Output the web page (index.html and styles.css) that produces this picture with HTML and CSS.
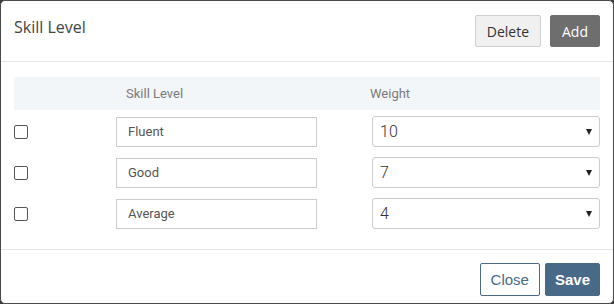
FILE: index.html
```html
<!DOCTYPE html>
<html lang="en">

<head>
  <meta charset="UTF-8">
  <meta name="viewport" content="width=device-width, initial-scale=1.0">
  <title>Skill Level</title>
  <link rel="stylesheet" href="styles.css">
</head>

<body>
  <div class="modal">
    <div class="modal-header">
      <h1>Skill Level</h1>
      <div class="header-buttons">
        <button class="btn btn-light">Delete</button>
        <button class="btn btn-dark">Add</button>
      </div>
    </div>

    <div class="modal-body">
      <div class="table-head">
        <div></div>
        <div class="th th-name">Skill Level</div>
        <div class="th th-weight">Weight</div>
      </div>

      <div class="row">
        <div class="cell-check"><input type="checkbox"></div>
        <div><input type="text" class="text-input" value="Fluent"></div>
        <div class="select-wrap">
          <select>
            <option>10</option>
          </select>
        </div>
      </div>
      <div class="row">
        <div class="cell-check"><input type="checkbox"></div>
        <div><input type="text" class="text-input" value="Good"></div>
        <div class="select-wrap">
          <select>
            <option>7</option>
          </select>
        </div>
      </div>
      <div class="row">
        <div class="cell-check"><input type="checkbox"></div>
        <div><input type="text" class="text-input" value="Average"></div>
        <div class="select-wrap">
          <select>
            <option>4</option>
          </select>
        </div>
      </div>
    </div>

    <div class="modal-footer">
      <button class="btn-foot close">Close</button>
      <button class="btn-foot save">Save</button>
    </div>
  </div>
</body>

</html>
```

FILE: styles.css
```css
body {
  margin: 0;
  padding: 0;
  background-color: #3a3a3a;
  font-family: "Open Sans", Arial, sans-serif;
}

.modal {
  width: 614px;
  height: 304px;
  box-sizing: border-box;
  background-color: #fff;
  border: 1px solid #4a4a4a;
  border-radius: 5px;
  overflow: hidden;
}

.modal-header {
  display: flex;
  justify-content: space-between;
  align-items: flex-start;
  height: 61px;
  box-sizing: border-box;
  padding: 14px 13px 0 13px;
  border-bottom: 1px solid #e5e5e5;
}

.modal-header h1 {
  margin: 1px 0 0 0;
  font-size: 16px;
  font-weight: normal;
  color: #444;
  line-height: 22px;
}

.header-buttons {
  display: flex;
  gap: 9px;
}

.btn {
  font-family: "Open Sans", Arial, sans-serif;
  font-size: 14px;
  height: 32px;
  padding: 0 11px;
  border-radius: 2px;
  cursor: pointer;
}

.btn-light {
  background-color: #f0f0f0;
  border: 1px solid #cfcfcf;
  color: #333;
}

.btn-dark {
  background-color: #6e6e6e;
  border: 1px solid #6e6e6e;
  color: #fff;
}

.modal-body {
  padding: 15px 13px 20px 13px;
  height: 188px;
  box-sizing: border-box;
  border-bottom: 1px solid #e5e5e5;
}

.table-head,
.row {
  display: grid;
  grid-template-columns: 102px 256px 1fr;
}

.table-head {
  background-color: #f2f6f9;
  height: 33px;
  align-items: center;
  margin-bottom: 6px;
}

.th {
  font-family: Roboto, Arial, sans-serif;
  font-size: 13px;
  color: #7a7a7a;
}

.th-name {
  padding-left: 10px;
}

.th-weight {
  margin-left: -2px;
}

.row {
  height: 31px;
  margin-bottom: 10px;
  align-items: center;
}

.cell-check input {
  appearance: none;
  -webkit-appearance: none;
  display: block;
  width: 14px;
  height: 14px;
  margin: 1px 0 0 0;
  border: 1px solid #555;
  border-radius: 2px;
  background-color: #fff;
}

.text-input {
  display: block;
  width: 201px;
  height: 30px;
  box-sizing: border-box;
  padding: 0 11px;
  border: 1px solid #cccccc;
  font-family: Roboto, Arial, sans-serif;
  font-size: 13px;
  color: #555;
  outline: none;
}

.select-wrap {
  position: relative;
}

.select-wrap select {
  appearance: none;
  -webkit-appearance: none;
  display: block;
  width: 100%;
  height: 31px;
  box-sizing: border-box;
  padding: 0 7px;
  border: 1px solid #cccccc;
  border-radius: 3px;
  background-color: #fff;
  font-family: Roboto, Arial, sans-serif;
  font-size: 16px;
  font-weight: 300;
  color: #333;
}

.select-wrap::after {
  content: "";
  position: absolute;
  right: 8px;
  top: 13px;
  border-left: 3px solid transparent;
  border-right: 3px solid transparent;
  border-top: 6px solid #222;
  pointer-events: none;
}

.modal-footer {
  display: flex;
  justify-content: flex-end;
  gap: 5px;
  padding: 13px 13px 0 13px;
}

.btn-foot {
  font-family: "Liberation Sans", Arial, sans-serif;
  font-size: 15px;
  height: 33px;
  padding: 0 10px;
  border-radius: 2px;
  cursor: pointer;
}

.btn-foot.close {
  background-color: #fff;
  border: 1px solid #4a6a86;
  color: #4a6a86;
}

.btn-foot.save {
  background-color: #486a88;
  border: 1px solid #486a88;
  color: #fff;
  font-weight: bold;
  padding: 0 9px;
}
```
